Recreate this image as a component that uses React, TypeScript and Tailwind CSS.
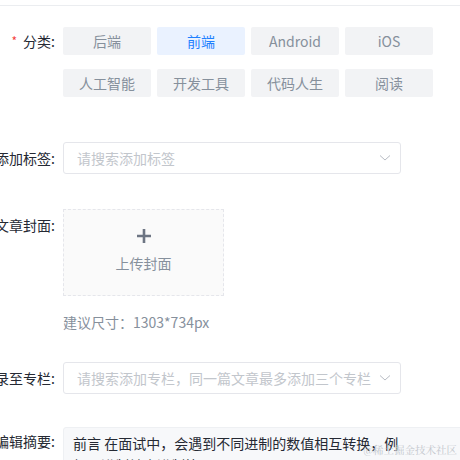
import React from "react";

const FONT = { fontFamily: '"Noto Sans CJK SC", "Noto Sans", sans-serif' };

const categories = ["后端", "前端", "Android", "iOS", "人工智能", "开发工具", "代码人生", "阅读"];

function Chevron() {
  return (
    <svg width="12" height="8" viewBox="0 0 12 8" fill="none" className="shrink-0">
      <path d="M1 1.5 L6 6 L11 1.5" stroke="#b8bcc4" strokeWidth="1" />
    </svg>
  );
}

function Label({ children, required }: { children: React.ReactNode; required?: boolean }) {
  return (
    <div className="w-[55px] h-[32px] shrink-0 flex items-center justify-end whitespace-nowrap text-[14px] text-[#252933]">
      {required && <span className="text-[#f53f3f] text-[12px] mr-[6px]">*</span>}
      <span>{children}</span>
    </div>
  );
}

function SearchSelect({ placeholder }: { placeholder: string }) {
  return (
    <div className="ml-2 w-[338px] h-[32px] border border-[#e5e6eb] rounded-[3px] flex items-center pl-[13px] pr-[9px] gap-1">
      <span className="flex-1 text-[14px] text-[#c2c6cc] whitespace-nowrap overflow-hidden">{placeholder}</span>
      <Chevron />
    </div>
  );
}

export default function App() {
  return (
    <div className="w-[460px] h-[460px] overflow-hidden bg-white relative" style={FONT}>
      <div className="mt-[5px] h-px bg-[#ebedf0]" />

      <div className="pt-[21px] flex flex-col">
        {/* category */}
        <div className="flex items-start">
          <div className="h-[28px] flex items-center">
            <Label required>分类:</Label>
          </div>
          <div className="ml-2 grid grid-cols-[repeat(4,88px)] gap-x-[6px] gap-y-[14px]">
            {categories.map((c) => (
              <div
                key={c}
                className={
                  c === "前端"
                    ? "h-[28px] rounded-[2px] bg-[#eaf2ff] text-[#1e80ff] text-[14px] flex items-center justify-center"
                    : "h-[28px] rounded-[2px] bg-[#f2f3f5] text-[#86909c] text-[14px] flex items-center justify-center"
                }
              >
                {c}
              </div>
            ))}
          </div>
        </div>

        {/* tags */}
        <div className="flex items-center mt-[45px]">
          <Label>添加标签:</Label>
          <SearchSelect placeholder="请搜索添加标签" />
        </div>

        {/* cover */}
        <div className="flex items-start mt-[35px]">
          <Label>文章封面:</Label>
          <div className="ml-2 flex flex-col">
            <div className="w-[161px] h-[87px] border border-dashed border-[#e5e6eb] bg-[#fafafa] flex flex-col items-center pt-[19px]">
              <svg width="14" height="14" viewBox="0 0 14 14">
                <path d="M7 0 V14 M0 7 H14" stroke="#6d7583" strokeWidth="2.6" />
              </svg>
              <span className="mt-[9px] text-[14px] leading-[22px] text-[#86909c]">上传封面</span>
            </div>
            <div className="mt-[15px] text-[14px] leading-[22px] text-[#86909c] whitespace-nowrap">
              建议尺寸：1303*734px
            </div>
          </div>
        </div>

        {/* column */}
        <div className="flex items-center mt-[29px]">
          <Label>收录至专栏:</Label>
          <SearchSelect placeholder="请搜索添加专栏，同一篇文章最多添加三个专栏" />
        </div>

        {/* summary */}
        <div className="flex items-start mt-[33px]">
          <div className="mt-[-2px]">
            <Label>编辑摘要:</Label>
          </div>
          <div className="ml-2 w-[420px] shrink-0 h-[80px] bg-[#f7f8fa] border border-[#eef0f3] rounded-[3px] pl-[9px] pt-[4px] pr-[72px] text-[14px] leading-[22px] text-[#252933]">
            前言 在面试中，会遇到不同进制的数值相互转换，例如二进制转十进制等。
          </div>
        </div>
      </div>

      <div
        className="absolute right-[3px] top-[443px] text-[10.5px] leading-[14px] text-[#c3c7cd] whitespace-nowrap"
        style={{ fontFamily: '"Noto Serif CJK SC", "Noto Sans CJK SC", serif' }}
      >
        @稀土掘金技术社区
      </div>
    </div>
  );
}
